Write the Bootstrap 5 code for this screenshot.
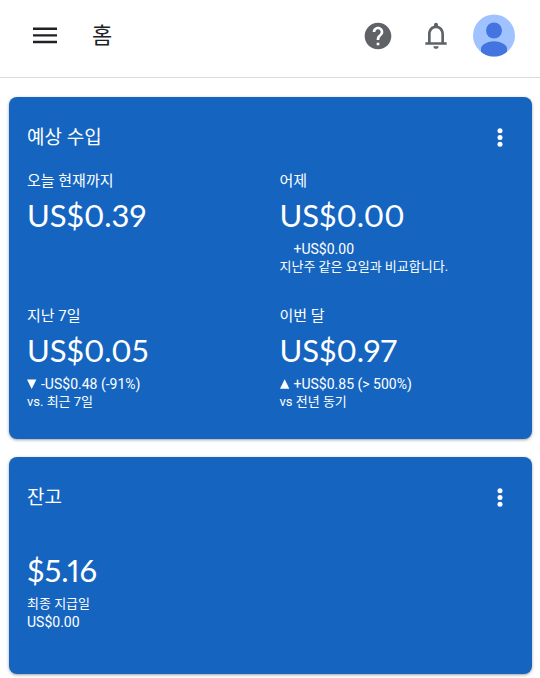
<!DOCTYPE html>
<html lang="ko">
<head>
<meta charset="utf-8">
<meta name="viewport" content="width=device-width, initial-scale=1">
<title>홈</title>
<link href="https://cdn.jsdelivr.net/npm/bootstrap@5.3.0/dist/css/bootstrap.min.css" rel="stylesheet">
<style>
body { font-family: Roboto, "Noto Sans CJK KR", sans-serif; background: #fff; color: #202124; }
.app-bar { padding: 14px 24px 20px 29px; border-bottom: 1px solid #dadce0; }
.app-bar svg, .tile svg { display: block; }
.app-title { font-size: 22px; line-height: 32px; margin-left: 31px; }
.bar-actions { gap: 26px; color: #5f6368; }
.avatar-btn { margin-left: -5px; }
.tiles { display: grid; gap: 18px; padding: 19px 8px 4px 9px; }
.tile { background: #1565c0; color: #fff; border: 0; border-radius: 8px; box-shadow: 0 1px 3px rgba(60, 64, 67, .5); padding: 25px 18px 28px; }
.tile-balance { padding-bottom: 43px; }
.tile-title { font-size: 19px; line-height: 32px; }
.more-btn { margin-right: -2px; }
.stats { display: grid; grid-template-columns: 1fr 1fr; gap: 28px 18px; margin-top: 15px; }
.stat-label { font-size: 15px; line-height: 24px; }
.amount { font-family: Lato, "Noto Sans CJK KR", sans-serif; font-size: 31px; line-height: 44px; font-variant-numeric: proportional-nums; }
.detail { font-size: 14px; line-height: 18px; }
.amount + .detail { margin-top: 3px; }
.note { font-size: 13px; line-height: 18px; }
.trend { width: 10px; height: 10px; margin-right: 4px; }
.tile-balance .amount { margin-top: 34px; }
.tile-balance .note { margin-top: 3px; }
</style>
</head>
<body>
<header class="app-bar d-flex align-items-center">
  <button type="button" class="btn p-0 border-0" aria-label="메뉴">
    <svg width="32" height="32" viewBox="0 0 32 32" fill="#202124"><path d="M4 7.500h24v2.400H4zM4 14.200h24v2.400H4zM4 20.800h24v2.400H4z"/></svg>
  </button>
  <h1 class="app-title fw-normal mb-0">홈</h1>
  <div class="bar-actions d-flex align-items-center ms-auto">
    <button type="button" class="btn p-0 border-0" aria-label="도움말">
      <svg width="32" height="32" viewBox="0 0 24 24" fill="#5f6368"><path d="M12 2C6.480 2 2 6.480 2 12s4.480 10 10 10 10-4.480 10-10S17.520 2 12 2zm1 17h-2v-2h2v2zm2.070-7.750-.9.920C13.450 12.900 13 13.500 13 15h-2v-.5c0-1.100.45-2.100 1.170-2.830l1.240-1.260c.37-.36.59-.86.59-1.410 0-1.100-.9-2-2-2s-2 .9-2 2H8c0-2.210 1.790-4 4-4s4 1.790 4 4c0 .88-.36 1.680-.93 2.250z"/></svg>
    </button>
    <button type="button" class="btn p-0 border-0" aria-label="알림">
      <svg width="32" height="32" viewBox="0 0 24 24" fill="#5f6368"><path d="M12 21.600c1.100 0 2-.9 2-2h-4c0 1.100.9 2 2 2zm6-5v-6c0-3.070-1.630-5.640-4.500-6.320V3.600c0-.83-.67-1.500-1.500-1.500s-1.500.67-1.500 1.500v.68C7.640 4.960 6 7.520 6 10.600v6H4v2h16v-2h-2zm-2 0H8v-6c0-2.480 1.510-4.500 4-4.500s4 2.020 4 4.500v6z"/></svg>
    </button>
    <button type="button" class="avatar-btn btn p-0 border-0 rounded-circle" aria-label="계정">
      <svg width="43" height="43" viewBox="0 0 43 43"><defs><clipPath id="disc"><circle cx="21" cy="21.500" r="21"/></clipPath></defs><g clip-path="url(#disc)"><path fill="#a0c2ff" d="M0 0h43v43H0z"/><circle cx="21" cy="16.500" r="8" fill="#4374e0"/><path fill="#4374e0" d="M8 43v-8.500c0-4 7-7.300 13-7.300s13 3.300 13 7.300V43z"/></g></svg>
    </button>
  </div>
</header>

<main class="tiles">
  <section class="tile card">
    <div class="d-flex justify-content-between align-items-center">
      <h2 class="tile-title fw-normal mb-0">예상 수입</h2>
      <button type="button" class="more-btn btn p-0 border-0" aria-label="더보기">
        <svg width="32" height="32" viewBox="0 0 32 32" fill="#fff"><circle cx="16" cy="8.800" r="2.500"/><circle cx="16" cy="15.500" r="2.500"/><circle cx="16" cy="22.200" r="2.500"/></svg>
      </button>
    </div>
    <div class="stats">
      <div>
        <div class="stat-label">오늘 현재까지</div>
        <div class="amount">US$0.39</div>
      </div>
      <div>
        <div class="stat-label">어제</div>
        <div class="amount">US$0.00</div>
        <div class="detail d-flex align-items-center"><span class="trend"></span>+US$0.00</div>
        <div class="note">지난주 같은 요일과 비교합니다.</div>
      </div>
      <div>
        <div class="stat-label">지난 7일</div>
        <div class="amount">US$0.05</div>
        <div class="detail d-flex align-items-center"><svg class="trend" viewBox="0 0 10 10" fill="#fff"><path d="M0 .4h9.400L4.700 10z"/></svg>-US$0.48 (-91%)</div>
        <div class="note">vs. 최근 7일</div>
      </div>
      <div>
        <div class="stat-label">이번 달</div>
        <div class="amount">US$0.97</div>
        <div class="detail d-flex align-items-center"><svg class="trend" viewBox="0 0 10 10" fill="#fff"><path d="M0 9.800h9.400L4.700.2z"/></svg>+US$0.85 (&gt; 500%)</div>
        <div class="note">vs 전년 동기</div>
      </div>
    </div>
  </section>

  <section class="tile tile-balance card">
    <div class="d-flex justify-content-between align-items-center">
      <h2 class="tile-title fw-normal mb-0">잔고</h2>
      <button type="button" class="more-btn btn p-0 border-0" aria-label="더보기">
        <svg width="32" height="32" viewBox="0 0 32 32" fill="#fff"><circle cx="16" cy="8.800" r="2.500"/><circle cx="16" cy="15.500" r="2.500"/><circle cx="16" cy="22.200" r="2.500"/></svg>
      </button>
    </div>
    <div class="amount">$5.16</div>
    <div class="note">최종 지급일</div>
    <div class="detail">US$0.00</div>
  </section>
</main>
<script src="https://cdn.jsdelivr.net/npm/bootstrap@5.3.0/dist/js/bootstrap.bundle.min.js"></script>
</body>
</html>
